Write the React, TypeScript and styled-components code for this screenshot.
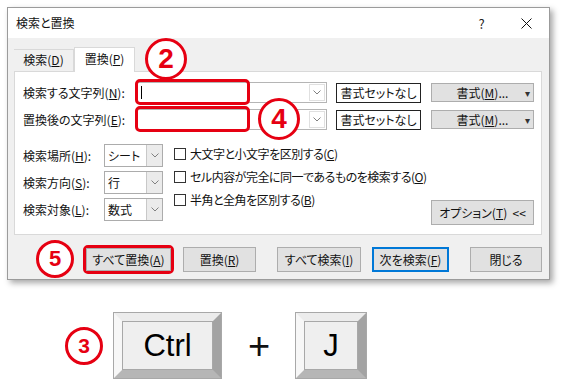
import React from "react";
import styled, { createGlobalStyle } from "styled-components";

const RED = "#e60012";

const GlobalStyle = createGlobalStyle`
  html, body {
    margin: 0;
    padding: 0;
    background: #fff;
  }
  body {
    font-family: "Noto Sans CJK JP", "Noto Sans", sans-serif;
    font-size: 12px;
    font-feature-settings: "palt";
    color: #111;
    white-space: nowrap;
  }
`;

const Chevron = () => (
  <svg width="8" height="5" viewBox="0 0 8 5">
    <path d="M0.5 0.5 L4 4 L7.5 0.5" fill="none" stroke="#808080" strokeWidth="1" />
  </svg>
);

const CloseIcon = () => (
  <svg width="11" height="11" viewBox="0 0 11 11">
    <path d="M0.5 0.5 L10.5 10.5 M10.5 0.5 L0.5 10.5" stroke="#111" strokeWidth="1" />
  </svg>
);

const App = () => {
  return (
    <>
      <GlobalStyle />
      <Page>
        <Dialog>
          <TitleBar>
            <Title>検索と置換</Title>
            <CaptionButton>?</CaptionButton>
            <CaptionButton>
              <CloseIcon />
            </CaptionButton>
          </TitleBar>
          <Body>
            <TabStrip>
              <Tab>
                検索(<u>D</u>)
              </Tab>
              <Tab $active>
                置換(<u>P</u>)
              </Tab>
            </TabStrip>
            <Panel>
              <FindRow>
                <RowLabel>
                  検索する文字列(<u>N</u>):
                </RowLabel>
                <Combo>
                  <ComboInput>
                    <Caret />
                  </ComboInput>
                  <ComboDrop>
                    <Chevron />
                  </ComboDrop>
                  <Highlight />
                </Combo>
                <ClearButton>書式セットなし</ClearButton>
                <FormatButton>
                  <span>
                    書式(<u>M</u>)...
                  </span>
                  <Arrow>▾</Arrow>
                </FormatButton>
              </FindRow>
              <FindRow $gap>
                <RowLabel>
                  置換後の文字列(<u>E</u>):
                </RowLabel>
                <Combo>
                  <ComboInput />
                  <ComboDrop>
                    <Chevron />
                  </ComboDrop>
                  <Highlight />
                </Combo>
                <ClearButton>書式セットなし</ClearButton>
                <FormatButton>
                  <span>
                    書式(<u>M</u>)...
                  </span>
                  <Arrow>▾</Arrow>
                </FormatButton>
              </FindRow>
              <OptionsArea>
                <SelectGrid>
                  <span>
                    検索場所(<u>H</u>):
                  </span>
                  <Select>
                    <SelectValue>シート</SelectValue>
                    <SelectDrop>
                      <Chevron />
                    </SelectDrop>
                  </Select>
                  <span>
                    検索方向(<u>S</u>):
                  </span>
                  <Select>
                    <SelectValue>行</SelectValue>
                    <SelectDrop>
                      <Chevron />
                    </SelectDrop>
                  </Select>
                  <span>
                    検索対象(<u>L</u>):
                  </span>
                  <Select>
                    <SelectValue>数式</SelectValue>
                    <SelectDrop>
                      <Chevron />
                    </SelectDrop>
                  </Select>
                </SelectGrid>
                <CheckList>
                  <CheckRow>
                    <CheckBox />
                    <span>
                      大文字と小文字を区別する(<u>C</u>)
                    </span>
                  </CheckRow>
                  <CheckRow>
                    <CheckBox />
                    <span>
                      セル内容が完全に同一であるものを検索する(<u>O</u>)
                    </span>
                  </CheckRow>
                  <CheckRow>
                    <CheckBox />
                    <span>
                      半角と全角を区別する(<u>B</u>)
                    </span>
                  </CheckRow>
                </CheckList>
                <OptionButton>
                  オプション(<u>T</u>)&nbsp;&nbsp;&lt;&lt;
                </OptionButton>
              </OptionsArea>
            </Panel>
            <ButtonRow>
              <Badge $size={38} $font={22}>
                5
              </Badge>
              <HighlightWrap>
                <DialogButton $w={85} $h={23}>
                  すべて置換(<u>A</u>)
                </DialogButton>
              </HighlightWrap>
              <DialogButton $w={73} $ml={9}>
                置換(<u>R</u>)
              </DialogButton>
              <DialogButton $w={84} $ml={21}>
                すべて検索(<u>I</u>)
              </DialogButton>
              <DialogButton $w={77} $ml={11} $default>
                次を検索(<u>F</u>)
              </DialogButton>
              <DialogButton $w={72} $ml={21}>
                閉じる
              </DialogButton>
            </ButtonRow>
          </Body>
          <FloatingBadge $size={42} $font={28} style={{ left: 137, top: 30 }}>
            2
          </FloatingBadge>
          <FloatingBadge $size={42} $font={28} style={{ left: 250, top: 90 }}>
            4
          </FloatingBadge>
        </Dialog>
        <KeysRow>
          <Badge $size={38} $font={21}>
            3
          </Badge>
          <Key $w={109} $ml={10}>
            <KeyFace>Ctrl</KeyFace>
          </Key>
          <Plus>+</Plus>
          <Key $w={72}>
            <KeyFace>J</KeyFace>
          </Key>
        </KeysRow>
      </Page>
    </>
  );
};

const Page = styled.div`
  width: 564px;
  height: 390px;
  padding: 7px 0 0 7px;
  box-sizing: border-box;
  overflow: hidden;
`;

const Dialog = styled.div`
  position: relative;
  width: 543px;
  height: 273px;
  box-sizing: border-box;
  border: 1px solid #9b9b9b;
  background: #f0f0f0;
  box-shadow: 3px 3px 6px rgba(0, 0, 0, 0.35);
  display: flex;
  flex-direction: column;
`;

const TitleBar = styled.div`
  height: 30px;
  background: #fff;
  display: flex;
  align-items: center;
  padding-left: 8px;
`;

const Title = styled.div`
  flex: 1;
  line-height: 16px;
`;

const CaptionButton = styled.div`
  width: 45px;
  height: 30px;
  display: flex;
  align-items: center;
  justify-content: center;
  font-size: 13px;
  color: #222;
`;

const Body = styled.div`
  flex: 1;
  padding: 9px 7px 0 6px;
  display: flex;
  flex-direction: column;
`;

const TabStrip = styled.div`
  display: flex;
  align-items: flex-end;
  height: 24px;
`;

const Tab = styled.div<{ $active?: boolean }>`
  position: relative;
  z-index: 1;
  box-sizing: border-box;
  width: ${(p) => (p.$active ? 61 : 60)}px;
  height: ${(p) => (p.$active ? 25 : 22)}px;
  margin-bottom: ${(p) => (p.$active ? -1 : 0)}px;
  padding-top: ${(p) => (p.$active ? 3 : 2)}px;
  border: 1px solid #d9d9d9;
  border-bottom: none;
  border-left: ${(p) => (p.$active ? "1px solid #d9d9d9" : "none")};
  background: ${(p) => (p.$active ? "#fff" : "#f0f0f0")};
  text-align: center;
  line-height: 16px;
`;

const Panel = styled.div`
  box-sizing: border-box;
  height: 164px;
  border: 1px solid #d9d9d9;
  background: #fff;
  padding: 10px 7px 0 8px;
`;

const FindRow = styled.div<{ $gap?: boolean }>`
  display: flex;
  align-items: center;
  height: 21px;
  margin-top: ${(p) => (p.$gap ? 6 : 0)}px;
`;

const RowLabel = styled.div`
  width: 113px;
  line-height: 16px;
`;

const Combo = styled.div`
  position: relative;
  box-sizing: border-box;
  width: 191px;
  height: 21px;
  border: 1px solid #b5b5b5;
  display: flex;
`;

const ComboInput = styled.div`
  flex: 1;
  display: flex;
  align-items: center;
`;

const Caret = styled.span`
  width: 1px;
  height: 13px;
  margin-left: 4px;
  background: #000;
`;

const ComboDrop = styled.div`
  width: 14px;
  margin: 1px;
  border: 1px solid #e0e0e0;
  display: flex;
  align-items: center;
  justify-content: center;
`;

const Highlight = styled.div`
  position: absolute;
  left: -2px;
  top: -4px;
  width: 115px;
  height: 26px;
  box-sizing: border-box;
  border: 3px solid ${RED};
  border-radius: 5px;
`;

const ClearButton = styled.div`
  box-sizing: border-box;
  margin-left: 9px;
  width: 85px;
  height: 20px;
  border: 1px solid #222;
  background: #fff;
  display: flex;
  align-items: center;
  justify-content: center;
`;

const FormatButton = styled.div`
  position: relative;
  box-sizing: border-box;
  margin-left: 10px;
  width: 103px;
  height: 19px;
  border: 1px solid #adadad;
  background: #e1e1e1;
  display: flex;
  align-items: center;
  justify-content: center;
`;

const Arrow = styled.span`
  position: absolute;
  right: 3px;
  font-size: 10px;
  color: #333;
`;

const OptionsArea = styled.div`
  display: flex;
  align-items: flex-end;
  margin-top: 14px;
`;

const SelectGrid = styled.div`
  display: grid;
  grid-template-columns: 81px 59px;
  grid-auto-rows: 23px;
  row-gap: 4px;
  align-items: center;
  padding-bottom: 4px;
`;

const Select = styled.div`
  box-sizing: border-box;
  height: 23px;
  border: 1px solid #acacac;
  display: flex;
`;

const SelectValue = styled.div`
  flex: 1;
  padding-left: 3px;
  display: flex;
  align-items: center;
`;

const SelectDrop = styled.div`
  width: 15px;
  border-left: 1px solid #c8c8c8;
  background: #ebebeb;
  display: flex;
  align-items: center;
  justify-content: center;
`;

const CheckList = styled.div`
  align-self: flex-start;
  margin-left: 11px;
  margin-top: -2px;
  display: flex;
  flex-direction: column;
`;

const CheckRow = styled.div`
  height: 23px;
  display: flex;
  align-items: center;
  gap: 4px;
  letter-spacing: -0.5px;
`;

const CheckBox = styled.span`
  box-sizing: border-box;
  width: 12px;
  height: 12px;
  border: 1px solid #333;
  background: #fff;
`;

const OptionButton = styled.div`
  box-sizing: border-box;
  margin-left: auto;
  width: 103px;
  height: 25px;
  border: 1px solid #adadad;
  background: #e1e1e1;
  display: flex;
  align-items: center;
  justify-content: center;
`;

const ButtonRow = styled.div`
  display: flex;
  align-items: center;
  padding-left: 22px;
  margin-top: 5px;
`;

const HighlightWrap = styled.div`
  margin-left: 9px;
  border: 3px solid ${RED};
  border-radius: 5px;
  display: flex;
`;

const DialogButton = styled.div<{ $w: number; $h?: number; $ml?: number; $default?: boolean }>`
  box-sizing: border-box;
  width: ${(p) => p.$w}px;
  height: ${(p) => p.$h ?? 25}px;
  margin-left: ${(p) => p.$ml ?? 0}px;
  border: 1px solid ${(p) => (p.$default ? "#0078d7" : "#adadad")};
  box-shadow: ${(p) => (p.$default ? "inset 0 0 0 1px #0078d7" : "none")};
  background: #e1e1e1;
  display: flex;
  align-items: center;
  justify-content: center;
`;

const Badge = styled.div<{ $size: number; $font: number }>`
  box-sizing: border-box;
  width: ${(p) => p.$size}px;
  height: ${(p) => p.$size}px;
  border: 3px solid ${RED};
  border-radius: 50%;
  background: #fff;
  color: ${RED};
  font-family: "Liberation Sans", Arial, sans-serif;
  font-weight: bold;
  font-size: ${(p) => p.$font}px;
  display: flex;
  align-items: center;
  justify-content: center;
  flex-shrink: 0;
`;

const FloatingBadge = styled(Badge)`
  position: absolute;
  z-index: 2;
`;

const KeysRow = styled.div`
  display: flex;
  align-items: center;
  margin: 33px 0 0 58px;
`;

const Key = styled.div<{ $w: number; $ml?: number }>`
  box-sizing: border-box;
  width: ${(p) => p.$w - 2}px;
  height: 65px;
  margin-left: ${(p) => (p.$ml ?? 0) + 1}px;
  border: 8px solid;
  border-color: #ececec #a3a3a3 #b6b6b6 #f7f7f7;
  outline: 1px solid #a8a8a8;
  display: flex;
`;

const KeyFace = styled.div`
  flex: 1;
  border: 1px solid #a8a8a8;
  background: #efefef;
  display: flex;
  align-items: center;
  justify-content: center;
  font-family: "Liberation Sans", Arial, sans-serif;
  font-size: 31px;
  color: #000;
`;

const Plus = styled.div`
  width: 24px;
  margin: 0 24px 0 26px;
  text-align: center;
  font-family: "Liberation Sans", Arial, sans-serif;
  font-size: 38px;
  line-height: 1;
`;

export default App;
